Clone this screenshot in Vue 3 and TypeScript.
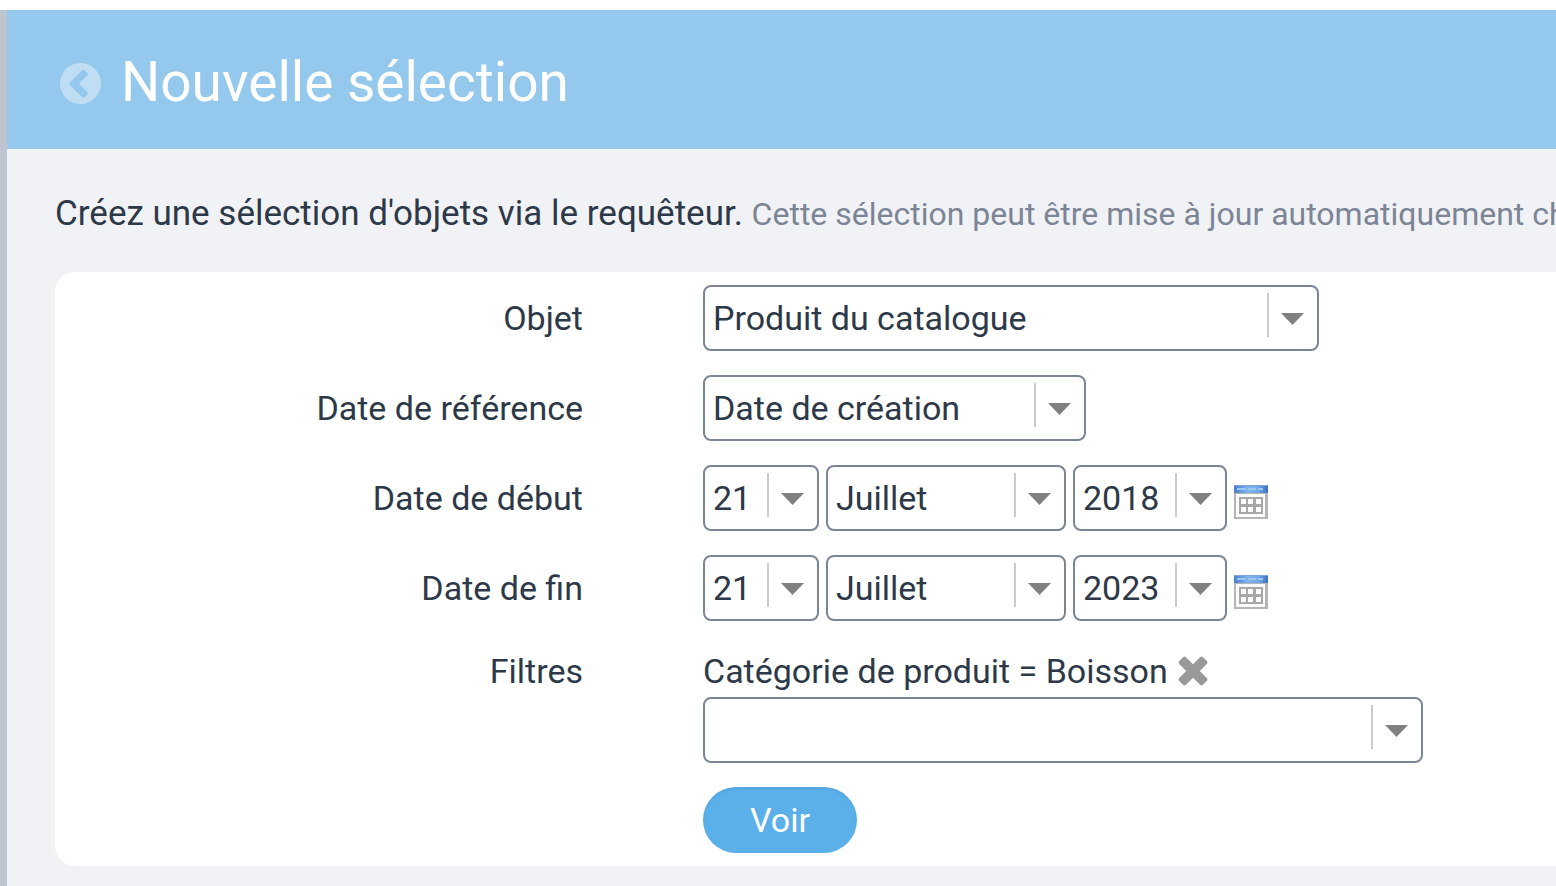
<script setup lang="ts">
import { ref } from 'vue'

interface DateRow {
  id: string
  label: string
  day: string
  month: string
  year: string
}

const months = ['Janvier', 'Février', 'Mars', 'Avril', 'Mai', 'Juin', 'Juillet', 'Août', 'Septembre', 'Octobre', 'Novembre', 'Décembre']
const days = Array.from({ length: 31 }, (_, i) => String(i + 1))
const years = Array.from({ length: 10 }, (_, i) => String(2016 + i))

const objet = ref('Produit du catalogue')
const reference = ref('Date de création')
const filtre = ref('')
const filtreActif = ref(true)
const dates = ref<DateRow[]>([
  { id: 'debut', label: 'Date de début', day: '21', month: 'Juillet', year: '2018' },
  { id: 'fin', label: 'Date de fin', day: '21', month: 'Juillet', year: '2023' },
])
</script>

<template>
  <div class="page">
    <header class="header">
      <button class="icon-button" type="button" aria-label="Retour">
        <svg class="back-icon" viewBox="0 0 41 41" aria-hidden="true">
          <circle cx="20.500" cy="20.500" r="20.500" />
          <path d="M22.200 7.300L9.700 19.500q-1 1.300 0 2.600L22.200 34.300q1.200 1.100 2.400 0l2.800-2.700q1.100-1.200 0-2.400L19 20.800l8.400-8.400q1.100-1.200 0-2.400l-2.800-2.700q-1.200-1.100-2.400 0z" />
        </svg>
      </button>
      <h1>Nouvelle sélection</h1>
    </header>

    <main class="content">
      <p class="intro">
        Créez une sélection d'objets via le requêteur.
        <small>Cette sélection peut être mise à jour automatiquement ch</small>
      </p>

      <form class="card" @submit.prevent>
        <label class="label" for="objet">Objet</label>
        <div class="field">
          <span class="select w-object">
            <select id="objet" v-model="objet">
              <option>Produit du catalogue</option>
            </select>
            <svg viewBox="0 0 40 44" aria-hidden="true"><path class="rule" d="M0 0h2v44H0z" /><path d="M14 20h23L25.500 32z" /></svg>
          </span>
        </div>

        <label class="label" for="reference">Date de référence</label>
        <div class="field">
          <span class="select w-reference">
            <select id="reference" v-model="reference">
              <option>Date de création</option>
            </select>
            <svg viewBox="0 0 40 44" aria-hidden="true"><path class="rule" d="M0 0h2v44H0z" /><path d="M14 20h23L25.500 32z" /></svg>
          </span>
        </div>

        <template v-for="row in dates" :key="row.id">
          <label class="label" :for="row.id">{{ row.label }}</label>
          <div class="field">
            <span class="select w-day">
              <select :id="row.id" v-model="row.day">
                <option v-for="d in days" :key="d">{{ d }}</option>
              </select>
              <svg viewBox="0 0 40 44" aria-hidden="true"><path class="rule" d="M0 0h2v44H0z" /><path d="M14 20h23L25.500 32z" /></svg>
            </span>
            <span class="select w-month">
              <select v-model="row.month" :aria-label="row.label + ', mois'">
                <option v-for="m in months" :key="m">{{ m }}</option>
              </select>
              <svg viewBox="0 0 40 44" aria-hidden="true"><path class="rule" d="M0 0h2v44H0z" /><path d="M14 20h23L25.500 32z" /></svg>
            </span>
            <span class="select w-year">
              <select v-model="row.year" :aria-label="row.label + ', année'">
                <option v-for="y in years" :key="y">{{ y }}</option>
              </select>
              <svg viewBox="0 0 40 44" aria-hidden="true"><path class="rule" d="M0 0h2v44H0z" /><path d="M14 20h23L25.500 32z" /></svg>
            </span>
            <button class="icon-button" type="button" :aria-label="row.label + ', calendrier'">
              <svg class="calendar" viewBox="0 0 34 34" aria-hidden="true">
                <defs>
                  <linearGradient :id="'bar-' + row.id" x1="0" x2="1" y1="0" y2="0">
                    <stop offset="0" stop-color="#4a7fcb" />
                    <stop offset="0.4" stop-color="#7db4ee" />
                    <stop offset="0.7" stop-color="#73abea" />
                    <stop offset="1" stop-color="#3c70bf" />
                  </linearGradient>
                </defs>
                <path fill="#b5b5b5" d="M0 8h34v26H0z" />
                <path fill="#fbfbfb" d="M2 9h29v23H2z" />
                <path :fill="'url(#bar-' + row.id + ')'" d="M0 0h34v8H0z" />
                <path fill="#7ba3d8" d="M0 0h34v1H0z" />
                <path fill="#9cc6f2" d="M3 3h9v2H3zM14 3h8v2h-8zM24 3h5v2h-5z" />
                <path fill="#a8a8a8" d="M5 12h24v17H5z" />
                <path fill="#fff" d="M7 14h5v5H7zM14 14h5v5h-5zM22 14h5v5h-5zM7 22h5v5H7zM14 22h5v5h-5zM22 22h5v5h-5z" />
              </svg>
            </button>
          </div>
        </template>

        <label class="label filter-label" for="filtre">Filtres</label>
        <div class="filters">
          <div v-if="filtreActif" class="filter-line">
            <span>Catégorie de produit = Boisson</span>
            <button class="icon-button" type="button" aria-label="Supprimer le filtre" @click="filtreActif = false">
              <svg class="remove" viewBox="0 0 30 30" aria-hidden="true">
                <path d="M5 1.200q1.500-1.300 3 0l7 7 7-7q1.500-1.300 3 0l3.800 3.800q1.300 1.500 0 3l-7 7 7 7q1.300 1.500 0 3L25 28.800q-1.500 1.300-3 0l-7-7-7 7q-1.500 1.300-3 0L1.200 25q-1.300-1.500 0-3l7-7-7-7q-1.300-1.500 0-3z" />
              </svg>
            </button>
          </div>
          <span class="select w-filter">
            <select id="filtre" v-model="filtre">
              <option value=""></option>
              <option>Catégorie de produit</option>
            </select>
            <svg viewBox="0 0 40 44" aria-hidden="true"><path class="rule" d="M0 0h2v44H0z" /><path d="M14 20h23L25.500 32z" /></svg>
          </span>
        </div>

        <button class="submit" type="submit">Voir</button>
      </form>
    </main>
  </div>
</template>

<style>
body {
  background: #f1f2f6;
}
</style>

<style scoped>
.page {
  box-sizing: border-box;
  min-height: 100vh;
  border-top: 10px solid #fff;
  background: linear-gradient(to right, #bec5d1 7px, #f1f2f6 7px);
  padding-left: 7px;
  overflow: hidden;
  font-family: Roboto, Inter, sans-serif;
  font-size: 34px;
  line-height: 40px;
  color: #2d3948;
}

.header {
  display: flex;
  align-items: center;
  gap: 20px;
  box-sizing: border-box;
  height: 139px;
  padding: 8px 53px 0;
  background: #94c8ed;
}

h1 {
  margin: 0;
  padding-bottom: 4px;
  font-size: 55px;
  line-height: 64px;
  font-weight: 400;
  color: #fff;
}

.icon-button {
  display: block;
  padding: 0;
  border: 0;
  background: none;
  cursor: pointer;
}

.icon-button svg {
  display: block;
}

.back-icon {
  width: 41px;
  height: 41px;
  fill: #bfdef4;
}

.back-icon path {
  fill: #94c8ed;
}

.content {
  padding: 45px 0 20px 48px;
}

.intro {
  height: 40px;
  margin: 0 0 38px;
  font-size: 35px;
  white-space: nowrap;
}

.intro small {
  font-size: 32px;
  color: #7c8595;
}

.card {
  display: grid;
  grid-template-columns: 528fr 853fr;
  gap: 24px 120px;
  padding: 13px 0;
  border-radius: 20px 0 0 20px;
  background: #fff;
}

.label {
  align-self: center;
  text-align: right;
}

.field {
  display: flex;
  align-items: center;
  gap: 7px;
}

.select {
  position: relative;
  display: block;
  max-width: 100%;
}

.select select {
  display: block;
  box-sizing: border-box;
  width: 100%;
  height: 66px;
  margin: 0;
  padding: 0 48px 0 8px;
  border: 2px solid #7c8595;
  border-radius: 8px;
  background: #fff;
  appearance: none;
  font: inherit;
  color: inherit;
}

.select svg {
  position: absolute;
  top: 8px;
  right: 12px;
  width: 40px;
  height: 44px;
  fill: #808080;
  pointer-events: none;
}

.select .rule {
  fill: #cbcbcb;
}

.w-object {
  width: 616px;
}

.w-reference {
  width: 383px;
}

.w-day {
  width: 116px;
}

.w-month {
  width: 240px;
}

.w-year {
  width: 154px;
}

.w-filter {
  width: 720px;
}

.calendar {
  width: 34px;
  height: 34px;
  margin-top: 8px;
}

.filter-label {
  align-self: start;
  padding-top: 6px;
}

.filter-line {
  display: flex;
  align-items: center;
  gap: 10px;
  height: 52px;
}

.remove {
  width: 30px;
  height: 30px;
  fill: #999;
}

.submit {
  grid-column: 2;
  justify-self: start;
  min-width: 154px;
  height: 66px;
  padding: 0 40px;
  border: 0;
  border-radius: 33px;
  background: #5bb0ea;
  box-shadow: inset 0 2px 3px rgba(0, 60, 110, 0.1);
  font: inherit;
  color: #fff;
  cursor: pointer;
}
</style>
